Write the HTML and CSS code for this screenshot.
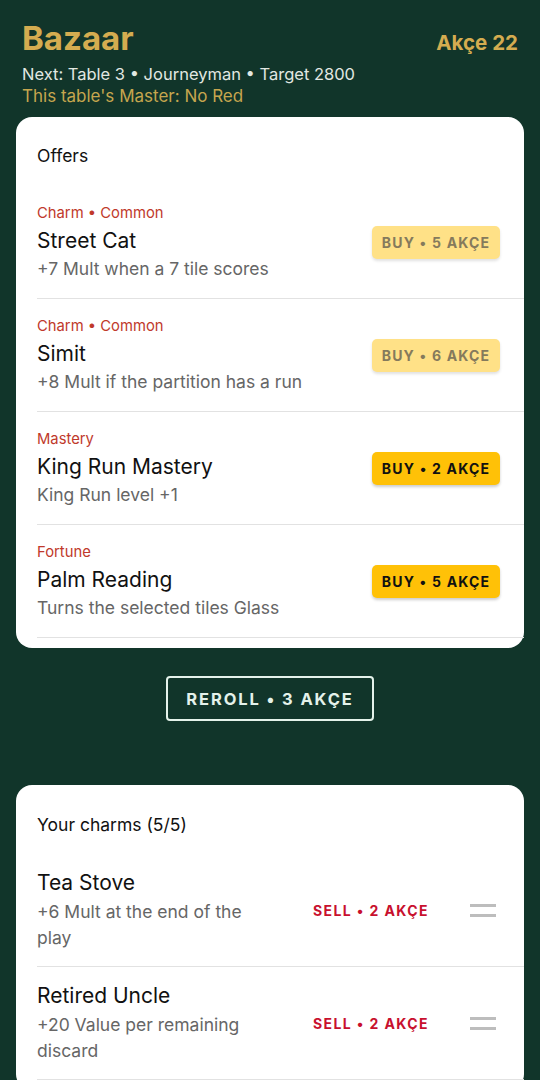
FILE: index.html
```html
<!DOCTYPE html>
<html lang="en">
<head>
<meta charset="utf-8">
<title>Bazaar</title>
<link rel="stylesheet" href="styles.css">
</head>
<body>
<header class="top">
  <div class="top-row">
    <h1 class="title">Bazaar</h1>
    <div class="purse">Akçe 22</div>
  </div>
  <div class="next">Next: Table 3 • Journeyman • Target 2800</div>
  <div class="master">This table's Master: No Red</div>
</header>

<section class="card offers">
  <div class="card-head">Offers</div>
  <div class="offer">
    <div class="info">
      <div class="cat">Charm • Common</div>
      <div class="name">Street Cat</div>
      <div class="desc">+7 Mult when a 7 tile scores</div>
    </div>
    <button class="buy disabled">BUY • 5 AKÇE</button>
  </div>
  <div class="offer">
    <div class="info">
      <div class="cat">Charm • Common</div>
      <div class="name">Simit</div>
      <div class="desc">+8 Mult if the partition has a run</div>
    </div>
    <button class="buy disabled">BUY • 6 AKÇE</button>
  </div>
  <div class="offer">
    <div class="info">
      <div class="cat">Mastery</div>
      <div class="name">King Run Mastery</div>
      <div class="desc">King Run level +1</div>
    </div>
    <button class="buy">BUY • 2 AKÇE</button>
  </div>
  <div class="offer">
    <div class="info">
      <div class="cat">Fortune</div>
      <div class="name">Palm Reading</div>
      <div class="desc">Turns the selected tiles Glass</div>
    </div>
    <button class="buy">BUY • 5 AKÇE</button>
  </div>
</section>

<div class="reroll-wrap">
  <button class="reroll">REROLL • 3 AKÇE</button>
</div>

<section class="card charms">
  <div class="card-head">Your charms (5/5)</div>
  <div class="charm">
    <div class="info">
      <div class="name">Tea Stove</div>
      <div class="desc">+6 Mult at the end of the play</div>
    </div>
    <button class="sell">SELL • 2 AKÇE</button>
    <span class="handle"></span>
  </div>
  <div class="charm">
    <div class="info">
      <div class="name">Retired Uncle</div>
      <div class="desc">+20 Value per remaining discard</div>
    </div>
    <button class="sell">SELL • 2 AKÇE</button>
    <span class="handle"></span>
  </div>
</section>
</body>
</html>
```

FILE: styles.css
```css
* { box-sizing: border-box; }
html, body {
  margin: 0;
  padding: 0;
}
body {
  background: #11352a;
  font-family: Inter, Roboto, "Liberation Sans", sans-serif;
  color: #111;
  width: 540px;
  height: 1080px;
  overflow: hidden;
}
.top {
  padding: 18px 22px 10px 22px;
}
.top-row {
  display: flex;
  justify-content: space-between;
  align-items: baseline;
}
.title {
  margin: 0;
  font-size: 33px;
  line-height: 40px;
  font-weight: 700;
  color: #d4ac50;
}
.purse {
  font-size: 20.5px;
  font-weight: 700;
  color: #d4ac50;
}
.next {
  margin-top: 5px;
  font-size: 16.5px;
  line-height: 22px;
  color: #e2e8e2;
}
.master {
  font-size: 17px;
  line-height: 22px;
  color: #c6a64e;
}
.card {
  background: #fff;
  margin: 0 16px;
  border-radius: 16px;
  padding: 27px 0 10px 21px;
}
.card-head {
  font-size: 17.5px;
  line-height: 24px;
  margin-bottom: 18px;
}
.offer {
  display: flex;
  align-items: center;
  padding: 17px 24px 17px 0;
  border-bottom: 1px solid #e2e2e2;
}
.info {
  flex: 1;
  min-width: 0;
}
.cat {
  font-size: 14.8px;
  line-height: 20px;
  color: #c0392b;
  margin-bottom: 4px;
}
.name {
  font-size: 21px;
  line-height: 28px;
}
.desc {
  margin-top: 2px;
  font-size: 17.5px;
  line-height: 24px;
  color: #666;
}
button {
  font-family: inherit;
  border: 0;
  cursor: pointer;
}
.buy {
  width: 128px;
  height: 33px;
  border-radius: 5px;
  background: #ffc107;
  color: #111;
  font-size: 14px;
  font-weight: 700;
  letter-spacing: 1.2px;
  box-shadow: 0 2px 3px rgba(0,0,0,0.2);
  padding: 0;
}
.buy.disabled {
  background: #ffe187;
  color: #857a5c;
  box-shadow: 0 2px 3px rgba(0,0,0,0.12);
}
.reroll-wrap {
  display: flex;
  justify-content: center;
  padding: 28px 0 64px 0;
}
.reroll {
  width: 208px;
  height: 45px;
  background: transparent;
  border: 2px solid #e4f2ea;
  border-radius: 4px;
  color: #e4f2ea;
  font-size: 16.5px;
  font-weight: 700;
  letter-spacing: 1.9px;
}
.charms {
  padding-top: 28px;
}
.charms .card-head {
  margin-bottom: 17px;
}
.charm {
  display: flex;
  align-items: center;
  padding: 15px 28px 15px 0;
  border-bottom: 1px solid #e2e2e2;
}
.charm .info {
  flex: 0 0 225px;
}
.charm .desc {
  margin-top: 2px;
  line-height: 26px;
}
.sell {
  margin-left: 51px;
  background: transparent;
  color: #c8102e;
  font-size: 14px;
  font-weight: 700;
  letter-spacing: 1.4px;
  padding: 0;
  width: 120px;
  text-align: left;
}
.handle {
  margin-left: auto;
  width: 26px;
  height: 13px;
  border-top: 3px solid #bdbdbd;
  border-bottom: 3px solid #bdbdbd;
}
```
